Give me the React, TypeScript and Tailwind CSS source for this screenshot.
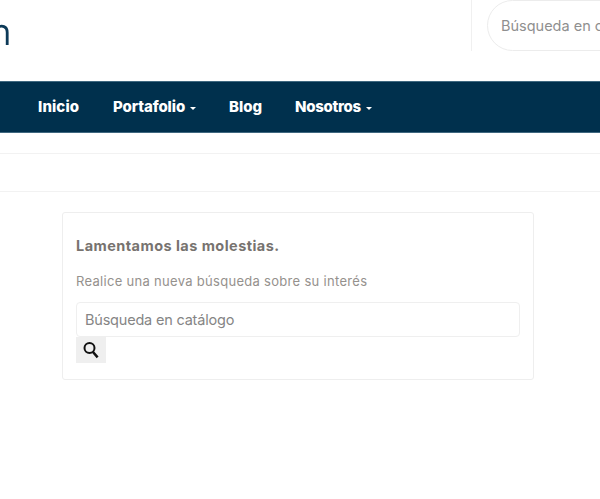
import React from "react";

function Caret() {
  return <span className="ml-[5px] inline-block w-0 h-0 border-x-[3px] border-x-transparent border-t-[3px] border-t-white align-middle" />;
}

export default function App() {
  return (
    <div className="w-[600px] h-[499px] overflow-hidden bg-white font-['Inter','Liberation_Sans',sans-serif]">
      <header className="h-[81px] flex items-start overflow-hidden">
        <svg width="10" height="24" viewBox="0 0 10 24" className="mt-[23px] shrink-0">
          <path d="M-3 4.5 C2 2 7.2 3 7.2 9.5 V22" fill="none" stroke="#0d3a58" strokeWidth="2.8" />
        </svg>
        <div className="ml-[461px] h-[51px] w-[16px] shrink-0 border-l border-[#f0f0f0]" />
        <div className="h-[51px] w-[200px] shrink-0 rounded-l-[26px] border border-[#ececec] pl-[13px] flex items-center text-[14.5px] text-[#8f8f8f] whitespace-nowrap">
          Búsqueda en catálogo
        </div>
      </header>
      <nav className="h-[52px] bg-[#00304d] border-y border-[#3f6880] flex items-center pl-[38px] pt-[1px] text-white font-extrabold text-[15px] whitespace-nowrap">
        <a className="w-[75px] tracking-[0.1px]">Inicio</a>
        <a className="w-[116px] tracking-[-0.1px]">Portafolio<Caret /></a>
        <a className="w-[66px] tracking-[0px]">Blog</a>
        <a className="tracking-[-0.3px]">Nosotros<Caret /></a>
      </nav>
      <div className="mt-[20px] h-[39px] border-y border-[#f2f2f2]" />
      <main className="mt-[20px] ml-[62px] w-[472px] h-[168px] rounded-[3px] border border-[#eeeeee] pt-[23px] px-[13px]">
        <h1 className="text-[14.5px] leading-[20px] font-bold text-[#77736f] tracking-[0.45px]">Lamentamos las molestias.</h1>
        <p className="mt-[15px] text-[13px] leading-[20px] text-[#95918d] tracking-[0.3px]">Realice una nueva búsqueda sobre su interés</p>
        <div className="mt-[11px] h-[35px] w-[444px] rounded-[4px] border border-[#efefef] pl-[8px] flex items-center text-[14.5px] tracking-[-0.2px] text-[#858585]">
          Búsqueda en catálogo
        </div>
        <button className="w-[30px] h-[26px] bg-[#efefef] flex items-center justify-center">
          <svg width="16" height="18" viewBox="0 0 16 18" fill="none" stroke="#111" strokeWidth="2">
            <circle cx="6.5" cy="7" r="5" />
            <path d="M10 11 L14.6 16.4" strokeWidth="2.5" />
          </svg>
        </button>
      </main>
    </div>
  );
}
